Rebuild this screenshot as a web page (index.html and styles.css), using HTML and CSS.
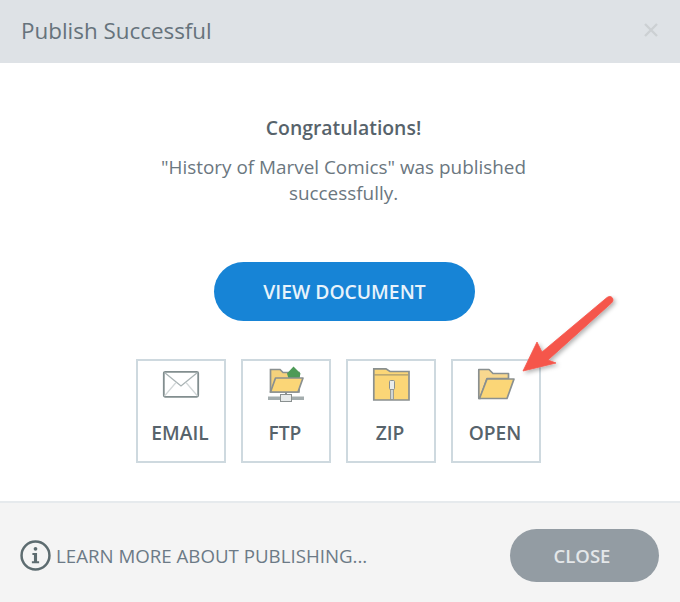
FILE: index.html
```html
<!DOCTYPE html>
<html lang="en">
<head>
<meta charset="utf-8">
<title>Publish Successful</title>
<link rel="stylesheet" href="styles.css">
</head>
<body>
<div class="dialog">
  <header class="head">
    <h1 class="title">Publish Successful</h1>
    <svg class="close-x" width="16" height="16" viewBox="0 0 16 16"><path d="M2 2L14 14M14 2L2 14" stroke="#ccd0d3" stroke-width="2.4" fill="none"/></svg>
  </header>
  <main class="body">
    <h2 class="congrats">Congratulations!</h2>
    <p class="msg">"History of Marvel Comics" was published<br>successfully.</p>
    <a class="primary">VIEW DOCUMENT</a>
    <div class="cards">
      <div class="card">
        <svg class="icon" width="40" height="36" viewBox="0 0 40 36"><rect x="2.800" y="5.800" width="34.400" height="25" rx="1.500" fill="#fff" stroke="#828e8f" stroke-width="1.800"/><path d="M3.500 6.500L20 20L36.500 6.500" fill="none" stroke="#a9b3b4" stroke-width="1.300"/><path d="M3.500 30L15 16.500M36.500 30L25 16.500" fill="none" stroke="#d2d7d8" stroke-width="1.200"/></svg>
        <span class="label">EMAIL</span>
      </div>
      <div class="card">
        <svg class="icon" width="40" height="36" viewBox="0 0 40 36"><path d="M4.500 26V3.500H14L17 6.500H33V26Z" fill="#f5d27c" stroke="#8a9090" stroke-width="1.700"/><path d="M27.500 0.500L34.500 7.500L33 14L23 14L21 7.500Z" fill="#4e9a57"/><path d="M4.500 26L9.500 12H37L32 26Z" fill="#fbd677" stroke="#8a9090" stroke-width="1.700" stroke-linejoin="round"/><path d="M20 26V30" stroke="#8a9090" stroke-width="2"/><rect x="2" y="30.500" width="36" height="3.500" fill="#a4adae"/><rect x="14.500" y="28.500" width="11" height="7" fill="#e7eaea" stroke="#8a9090"/></svg>
        <span class="label">FTP</span>
      </div>
      <div class="card">
        <svg class="icon" width="40" height="36" viewBox="0 0 40 36"><path d="M2.800 34V2.800H15L19 5.500H38V34Z" fill="#fbd677" stroke="#8a9090" stroke-width="1.700"/><path d="M3 8.800H37.500" stroke="#a89a70" stroke-width="1.200"/><rect x="18.500" y="14.500" width="5" height="9" rx="1" fill="#e9ecec" stroke="#8a9090"/><rect x="19.500" y="23.500" width="3" height="10" fill="#cfd5d5" stroke="#8a9090" stroke-width=".8"/></svg>
        <span class="label">ZIP</span>
      </div>
      <div class="card">
        <svg class="icon" width="40" height="36" viewBox="0 0 40 36"><path d="M2.800 32.500V3.500H13L17 7.500H32.500V12.500H11L4 32.500Z" fill="#f8d88f" stroke="#8a9090" stroke-width="1.700" stroke-linejoin="round"/><path d="M3.500 32.500L11 13H38L31 32.500Z" fill="#fbd677" stroke="#8a9090" stroke-width="1.700" stroke-linejoin="round"/></svg>
        <span class="label">OPEN</span>
      </div>
    </div>
  </main>
  <footer class="foot">
    <a class="learn">
      <svg class="info" width="31" height="31" viewBox="0 0 30 30"><circle cx="15" cy="15" r="13.500" fill="none" stroke="#5d6c70" stroke-width="2.400"/><circle cx="15" cy="8.500" r="1.800" fill="#5d6c70"/><path d="M12 12.500H16.500V20.500H18.500V22.500H11.500V20.500H13.500V14.500H12Z" fill="#5d6c70"/></svg>
      <span>LEARN MORE ABOUT PUBLISHING...</span>
    </a>
    <a class="close-btn">CLOSE</a>
  </footer>
  <svg class="arrow" width="110" height="95" viewBox="0 0 110 95"><defs><filter id="s" x="-20%" y="-20%" width="150%" height="150%"><feDropShadow dx="2" dy="2" stdDeviation="2" flood-color="#000" flood-opacity=".3"/></filter></defs><path d="M8 76L22 47L27 57L92 2.500C94 1 96 1 97.500 3C98.500 5 98 6.500 96.500 8L33 65L41 68Z" fill="#f5574c" stroke="#f5574c" stroke-width=".8" stroke-linejoin="round" filter="url(#s)"/></svg>
</div>
</body>
</html>
```
FILE: styles.css
```css
html, body { margin: 0; padding: 0; }
body { background: #fff; font-family: "Open Sans", "Noto Sans", sans-serif; }
.dialog { position: relative; width: 680px; height: 602px; display: flex; flex-direction: column; overflow: hidden; }
.head { height: 63px; background: #dee2e6; display: flex; align-items: center; justify-content: space-between; padding: 0 21px 3px; box-sizing: border-box; flex: none; }
.title { margin: 0; font-size: 22.400px; font-weight: 400; color: #66737c; }
.close-x { margin-right: 0; }
.body { flex: 1; display: flex; flex-direction: column; align-items: center; padding: 53px 0 0 7px; box-sizing: border-box; }
.congrats { margin: 0; font-size: 19.400px; line-height: 24px; font-weight: 600; color: #57636b; }
.msg { margin: 14px 0 0; font-size: 18.900px; line-height: 26px; color: #6b777f; text-align: center; }
.primary { margin: 56px 0 0 2px; width: 261px; height: 59px; border-radius: 30px; background: #1784d6; color: #e8f3fb; font-size: 19.300px; font-weight: 600; display: flex; align-items: center; justify-content: center; }
.cards { margin: 38px 0 0 -10px; display: flex; gap: 15px; }
.card { width: 90px; height: 104px; box-sizing: border-box; border: 2px solid #ced9df; display: flex; flex-direction: column; align-items: center; padding-top: 5px; }
.icon { flex: none; }
.label { margin: 19px 2px 0 0; font-size: 19.200px; line-height: 24px; font-weight: 600; color: #57636b; }
.foot { height: 101px; flex: none; box-sizing: border-box; border-top: 2px solid #e6eaed; background: #f4f4f4; display: flex; align-items: center; justify-content: space-between; padding: 6px 21px 0 20px; }
.learn { display: flex; align-items: center; gap: 5px; font-size: 18.700px; color: #6c7a86; }
.info { flex: none; }
.close-btn { width: 149px; height: 53px; box-sizing: border-box; padding-right: 5px; border-radius: 27px; background: #939ca3; color: #e4e7e9; font-size: 18.500px; font-weight: 600; display: flex; align-items: center; justify-content: center; }
.arrow { position: absolute; left: 515px; top: 295px; }
```
